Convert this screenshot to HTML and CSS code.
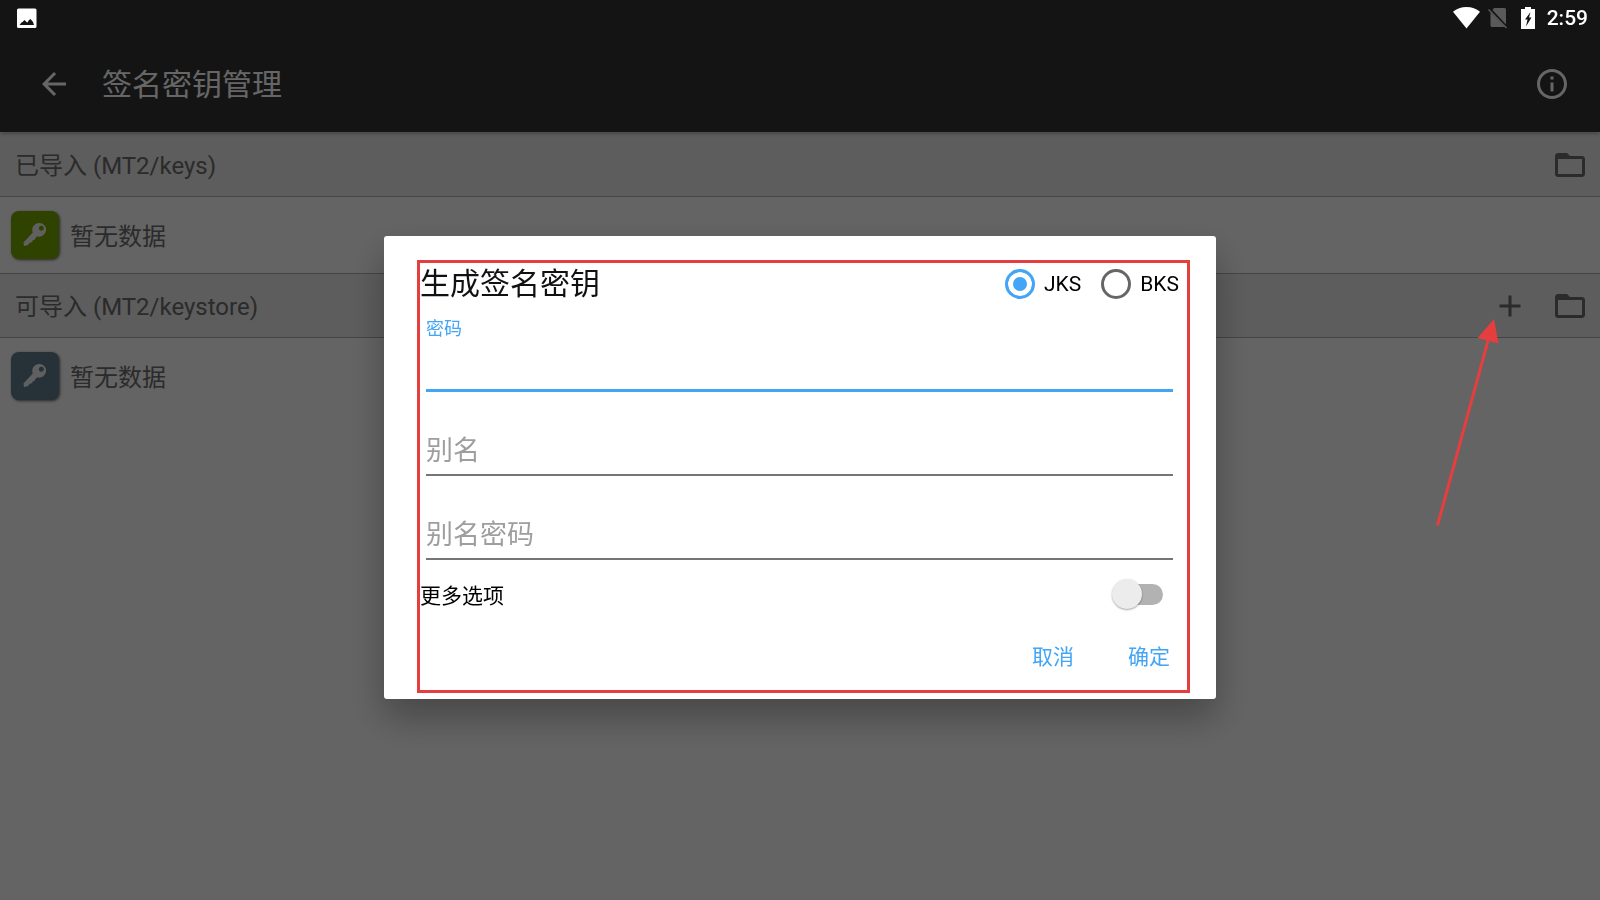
FILE: index.html
```html
<!DOCTYPE html>
<html lang="zh-CN">

<head>
    <meta charset="UTF-8">
    <meta name="viewport" content="width=device-width, initial-scale=1.0">
    <title>签名密钥管理</title>

    <link rel="stylesheet" href="styles.css">
</head>

<body>

    <div class="statusBar">
        <svg class="photo" viewBox="0 0 27 27">
            <path fill="#fff" fill-rule="evenodd" d="M5.500 3.500h16.500a1.500 1.500 0 0 1 1.500 1.500v16.500a1.500 1.500 0 0 1-1.500 1.500h-16.500a1.500 1.500 0 0 1-1.500-1.500v-16.500a1.500 1.500 0 0 1 1.500-1.500zM6.500 20h14.500l-1-3-2.500-3-1.500 1-1.500 2.500-1-.5-2-2-2 2-1 .5z" />
        </svg>
        <div class="statusRight">
            <svg width="27" height="22" viewBox="0 0 27 22">
                <path fill="#fff" d="M13.500 21.500L0 4.700Q5.500 0 13.500 0T27 4.700z" />
            </svg>
            <svg class="sim" width="20" height="22" viewBox="0 0 20 22">
                <path fill="#5a5a5a" d="M6 1h10.500q1.500 0 1.500 1.500v15L4.500 3zM2.500 5.500L17 20H4q-1.500 0-1.500-1.500z" />
                <path stroke="#5a5a5a" stroke-width="1.500" d="M.5 2.500l18 18.500" />
            </svg>
            <svg class="battery" width="14" height="22" viewBox="0 0 14 22">
                <path fill="#fff" d="M4 0h6v2h4v20H0V2h4z" />
                <path fill="#141414" d="M9.500 5L4 12.500h2.500L5 19.500l5.500-9H8z" />
            </svg>
            <span class="time">2:59</span>
        </div>
    </div>

    <header class="appBar">
        <button type="button" class="iconButton" aria-label="返回">
            <svg viewBox="0 0 24 24"><path d="M20 11H7.830l5.590-5.590L12 4l-8 8 8 8 1.410-1.410L7.830 13H20v-2z" /></svg>
        </button>
        <h1>签名密钥管理</h1>
        <button type="button" class="iconButton" aria-label="信息">
            <svg viewBox="0 0 24 24"><path d="M11 17h2v-6h-2v6zm1-15C6.480 2 2 6.480 2 12s4.480 10 10 10 10-4.480 10-10S17.520 2 12 2zm0 18c-4.410 0-8-3.590-8-8s3.590-8 8-8 8 3.590 8 8-3.590 8-8 8zM11 9h2V7h-2v2z" /></svg>
        </button>
    </header>

    <main class="keyList">
        <div class="groupHeader">
            <h2>已导入 (MT2/keys)</h2>
            <button type="button" class="iconButton" aria-label="打开文件夹">
                <svg viewBox="0 0 24 24"><path d="M20 6h-8l-2-2H4c-1.100 0-1.990.9-1.990 2L2 18c0 1.100.9 2 2 2h16c1.100 0 2-.9 2-2V8c0-1.100-.9-2-2-2zm0 12H4V8h16v10z" /></svg>
            </button>
        </div>
        <div class="keyRow">
            <span class="keyIcon green">
                <svg viewBox="0 0 48 48"><path fill-rule="evenodd" d="M28.300 12a6.800 6.800 0 1 1-2 13.300l-2.300 2.200-.3 1.500-2 .3-.5 2-2 .3-2.700 2.700-3.500.7-.5-3.500 9.300-10a6.800 6.800 0 0 1 6.500-9.500zm2 2.700a2.500 2.500 0 1 0 .1 0z" /></svg>
            </span>
            <p>暂无数据</p>
        </div>
        <div class="groupHeader">
            <h2>可导入 (MT2/keystore)</h2>
            <button type="button" class="iconButton" aria-label="添加">
                <svg viewBox="0 0 24 24"><path d="M19 13h-6v6h-2v-6H5v-2h6V5h2v6h6v2z" /></svg>
            </button>
            <button type="button" class="iconButton" aria-label="打开文件夹">
                <svg viewBox="0 0 24 24"><path d="M20 6h-8l-2-2H4c-1.100 0-1.990.9-1.990 2L2 18c0 1.100.9 2 2 2h16c1.100 0 2-.9 2-2V8c0-1.100-.9-2-2-2zm0 12H4V8h16v10z" /></svg>
            </button>
        </div>
        <div class="keyRow last">
            <span class="keyIcon blue">
                <svg viewBox="0 0 48 48"><path fill-rule="evenodd" d="M28.300 12a6.800 6.800 0 1 1-2 13.300l-2.300 2.200-.3 1.500-2 .3-.5 2-2 .3-2.700 2.700-3.500.7-.5-3.500 9.300-10a6.800 6.800 0 0 1 6.500-9.500zm2 2.700a2.500 2.500 0 1 0 .1 0z" /></svg>
            </span>
            <p>暂无数据</p>
        </div>
    </main>

    <div class="scrim">
        <form class="dialog" role="dialog" aria-labelledby="dialogTitle">
            <div class="titleRow">
                <h2 id="dialogTitle">生成签名密钥</h2>
                <label class="radio"><input type="radio" name="type" value="jks" checked>JKS</label>
                <label class="radio"><input type="radio" name="type" value="bks">BKS</label>
            </div>
            <div class="field active">
                <label for="password">密码</label>
                <input type="password" id="password">
            </div>
            <div class="field">
                <label for="alias">别名</label>
                <input type="text" id="alias">
            </div>
            <div class="field">
                <label for="aliasPassword">别名密码</label>
                <input type="password" id="aliasPassword">
            </div>
            <div class="moreRow">
                <label for="more">更多选项</label>
                <input type="checkbox" id="more" class="switch">
            </div>
            <div class="actions">
                <button type="button">取消</button>
                <button type="button">确定</button>
            </div>
            <div class="highlight"></div>
        </form>
    </div>

    <!-- pointer to the add button -->
    <svg class="arrow" viewBox="0 0 70 212">
        <path d="M8.500 208.500L60 20" fill="none" stroke="#e53e3e" stroke-width="3" />
        <path d="M65 2L48.500 21l21 5.500z" fill="#e53e3e" />
    </svg>

</body>

</html>
```

FILE: styles.css
```css
* {
    box-sizing: border-box;
}

body {
    margin: 0;
    min-height: 100vh;
    background-color: #fafafa;
    font-family: Roboto, 'Noto Sans CJK SC', sans-serif;
}

h1,
h2,
p {
    margin: 0;
    font-weight: 400;
}

button {
    padding: 0;
    border: none;
    background: none;
    font-family: inherit;
}

svg {
    display: block;
}

/* status bar stays bright above the scrim */
.statusBar {
    position: relative;
    z-index: 2;
    display: flex;
    justify-content: space-between;
    align-items: center;
    height: 36px;
    padding: 0 12px 0 13px;
    background-color: #141414;
}

.statusBar .photo {
    width: 27px;
    height: 27px;
}

.statusRight {
    display: flex;
    align-items: center;
}

.statusRight .sim {
    margin-left: 8px;
}

.statusRight .battery {
    margin: 0 12px 0 13px;
}

.time {
    color: #fff;
    font-size: 21px;
    font-weight: 500;
    line-height: 38px;
}

.iconButton svg {
    width: 36px;
    height: 36px;
    fill: currentColor;
}

.appBar {
    display: flex;
    align-items: center;
    gap: 30px;
    height: 96px;
    padding: 0 30px 0 36px;
    background-color: #333;
    color: #fff;
    box-shadow: 0 1px 4px rgba(0, 0, 0, 0.4);
}

.appBar h1 {
    flex: 1;
    padding-top: 2px;
    font-size: 30px;
    line-height: 36px;
}

.appBar .iconButton {
    color: #fff;
}

.keyList {
    padding-top: 1px;
    color: #6b6b6b;
}

.groupHeader {
    display: flex;
    align-items: center;
    gap: 24px;
    height: 64px;
    padding: 0 12px 0 15px;
    background-color: rgba(0, 0, 0, 0.07);
    border-bottom: 1px solid #acacac;
}

.groupHeader h2 {
    flex: 1;
    padding-bottom: 2px;
    font-size: 24px;
}

.groupHeader .iconButton {
    color: #6b6b6b;
}

.keyRow {
    display: flex;
    align-items: center;
    gap: 11px;
    height: 77px;
    padding: 0 11px;
    border-bottom: 1px solid #acacac;
    font-size: 24px;
}

.keyRow p {
    padding-bottom: 2px;
}

.keyRow.last {
    border-bottom-color: transparent;
}

.keyIcon {
    width: 48px;
    height: 48px;
    border-radius: 8px;
    box-shadow: 1px 1px 3px rgba(0, 0, 0, 0.6);
}

.keyIcon svg {
    fill: #f0f0f0;
}

.keyIcon.green {
    background-color: #78a500;
}

.keyIcon.blue {
    background-color: #607d8b;
}

.scrim {
    position: fixed;
    inset: 0;
    z-index: 1;
    display: flex;
    justify-content: center;
    align-items: center;
    padding-top: 35px;
    background-color: rgba(0, 0, 0, 0.6);
}

.dialog {
    position: relative;
    width: 52%;
    padding: 24px 37px 20px 36px;
    border-radius: 3px;
    background-color: #fff;
    box-shadow: 0 18px 36px rgba(0, 0, 0, 0.3);
    color: #000;
}

.titleRow {
    display: flex;
    align-items: center;
    gap: 20px;
    height: 48px;
}

.titleRow h2 {
    flex: 1;
    font-size: 30px;
    line-height: 36px;
    color: #111;
}

.radio {
    display: flex;
    align-items: center;
    gap: 9px;
    font-size: 21px;
}

.radio input {
    appearance: none;
    width: 30px;
    height: 30px;
    margin: 0;
    border: 3px solid #666;
    border-radius: 50%;
}

.radio input:checked {
    border-color: #42a5f5;
    background-color: #42a5f5;
    box-shadow: inset 0 0 0 5px #fff;
}

/* label and input share one cell, so an empty field shows its label inside */
.field {
    display: grid;
    grid-template-rows: 24px 52px;
    margin: 0 6px;
    padding-top: 8px;
}

.field label {
    grid-area: 2 / 1;
    font-size: 27px;
    line-height: 54px;
    color: #9e9e9e;
}

.field input {
    grid-area: 2 / 1;
    width: 100%;
    padding: 0;
    border: none;
    border-bottom: 2px solid #757575;
    outline: none;
    background: transparent;
    font-family: inherit;
    font-size: 27px;
}

.field.active label {
    grid-area: 1 / 1;
    font-size: 18px;
    line-height: 26px;
    color: #42a5f5;
}

.field.active input {
    border-bottom: 3px solid #42a5f5;
}

.moreRow {
    display: flex;
    justify-content: space-between;
    align-items: center;
    height: 48px;
    margin-top: 10px;
    padding-right: 16px;
    font-size: 21px;
}

.switch {
    appearance: none;
    width: 45px;
    height: 21px;
    margin: 0;
    border-radius: 11px;
    background-color: #b2b2b2;
}

.switch::before {
    content: "";
    display: block;
    width: 30px;
    height: 30px;
    margin: -5px 0 0 -6px;
    border-radius: 50%;
    background-color: #ececec;
    box-shadow: 0 1px 2px rgba(0, 0, 0, 0.35);
}

.actions {
    display: flex;
    justify-content: flex-end;
    margin: 13px -18px 0 0;
}

.actions button {
    width: 96px;
    height: 48px;
    font-size: 21px;
    color: #42a5f5;
}

.highlight {
    position: absolute;
    inset: 24px 26px 6px 33px;
    border: 3px solid #e53e3e;
    pointer-events: none;
}

.arrow {
    position: absolute;
    top: 317px;
    right: 101px;
    z-index: 2;
    width: 70px;
    height: 212px;
    pointer-events: none;
}
```
